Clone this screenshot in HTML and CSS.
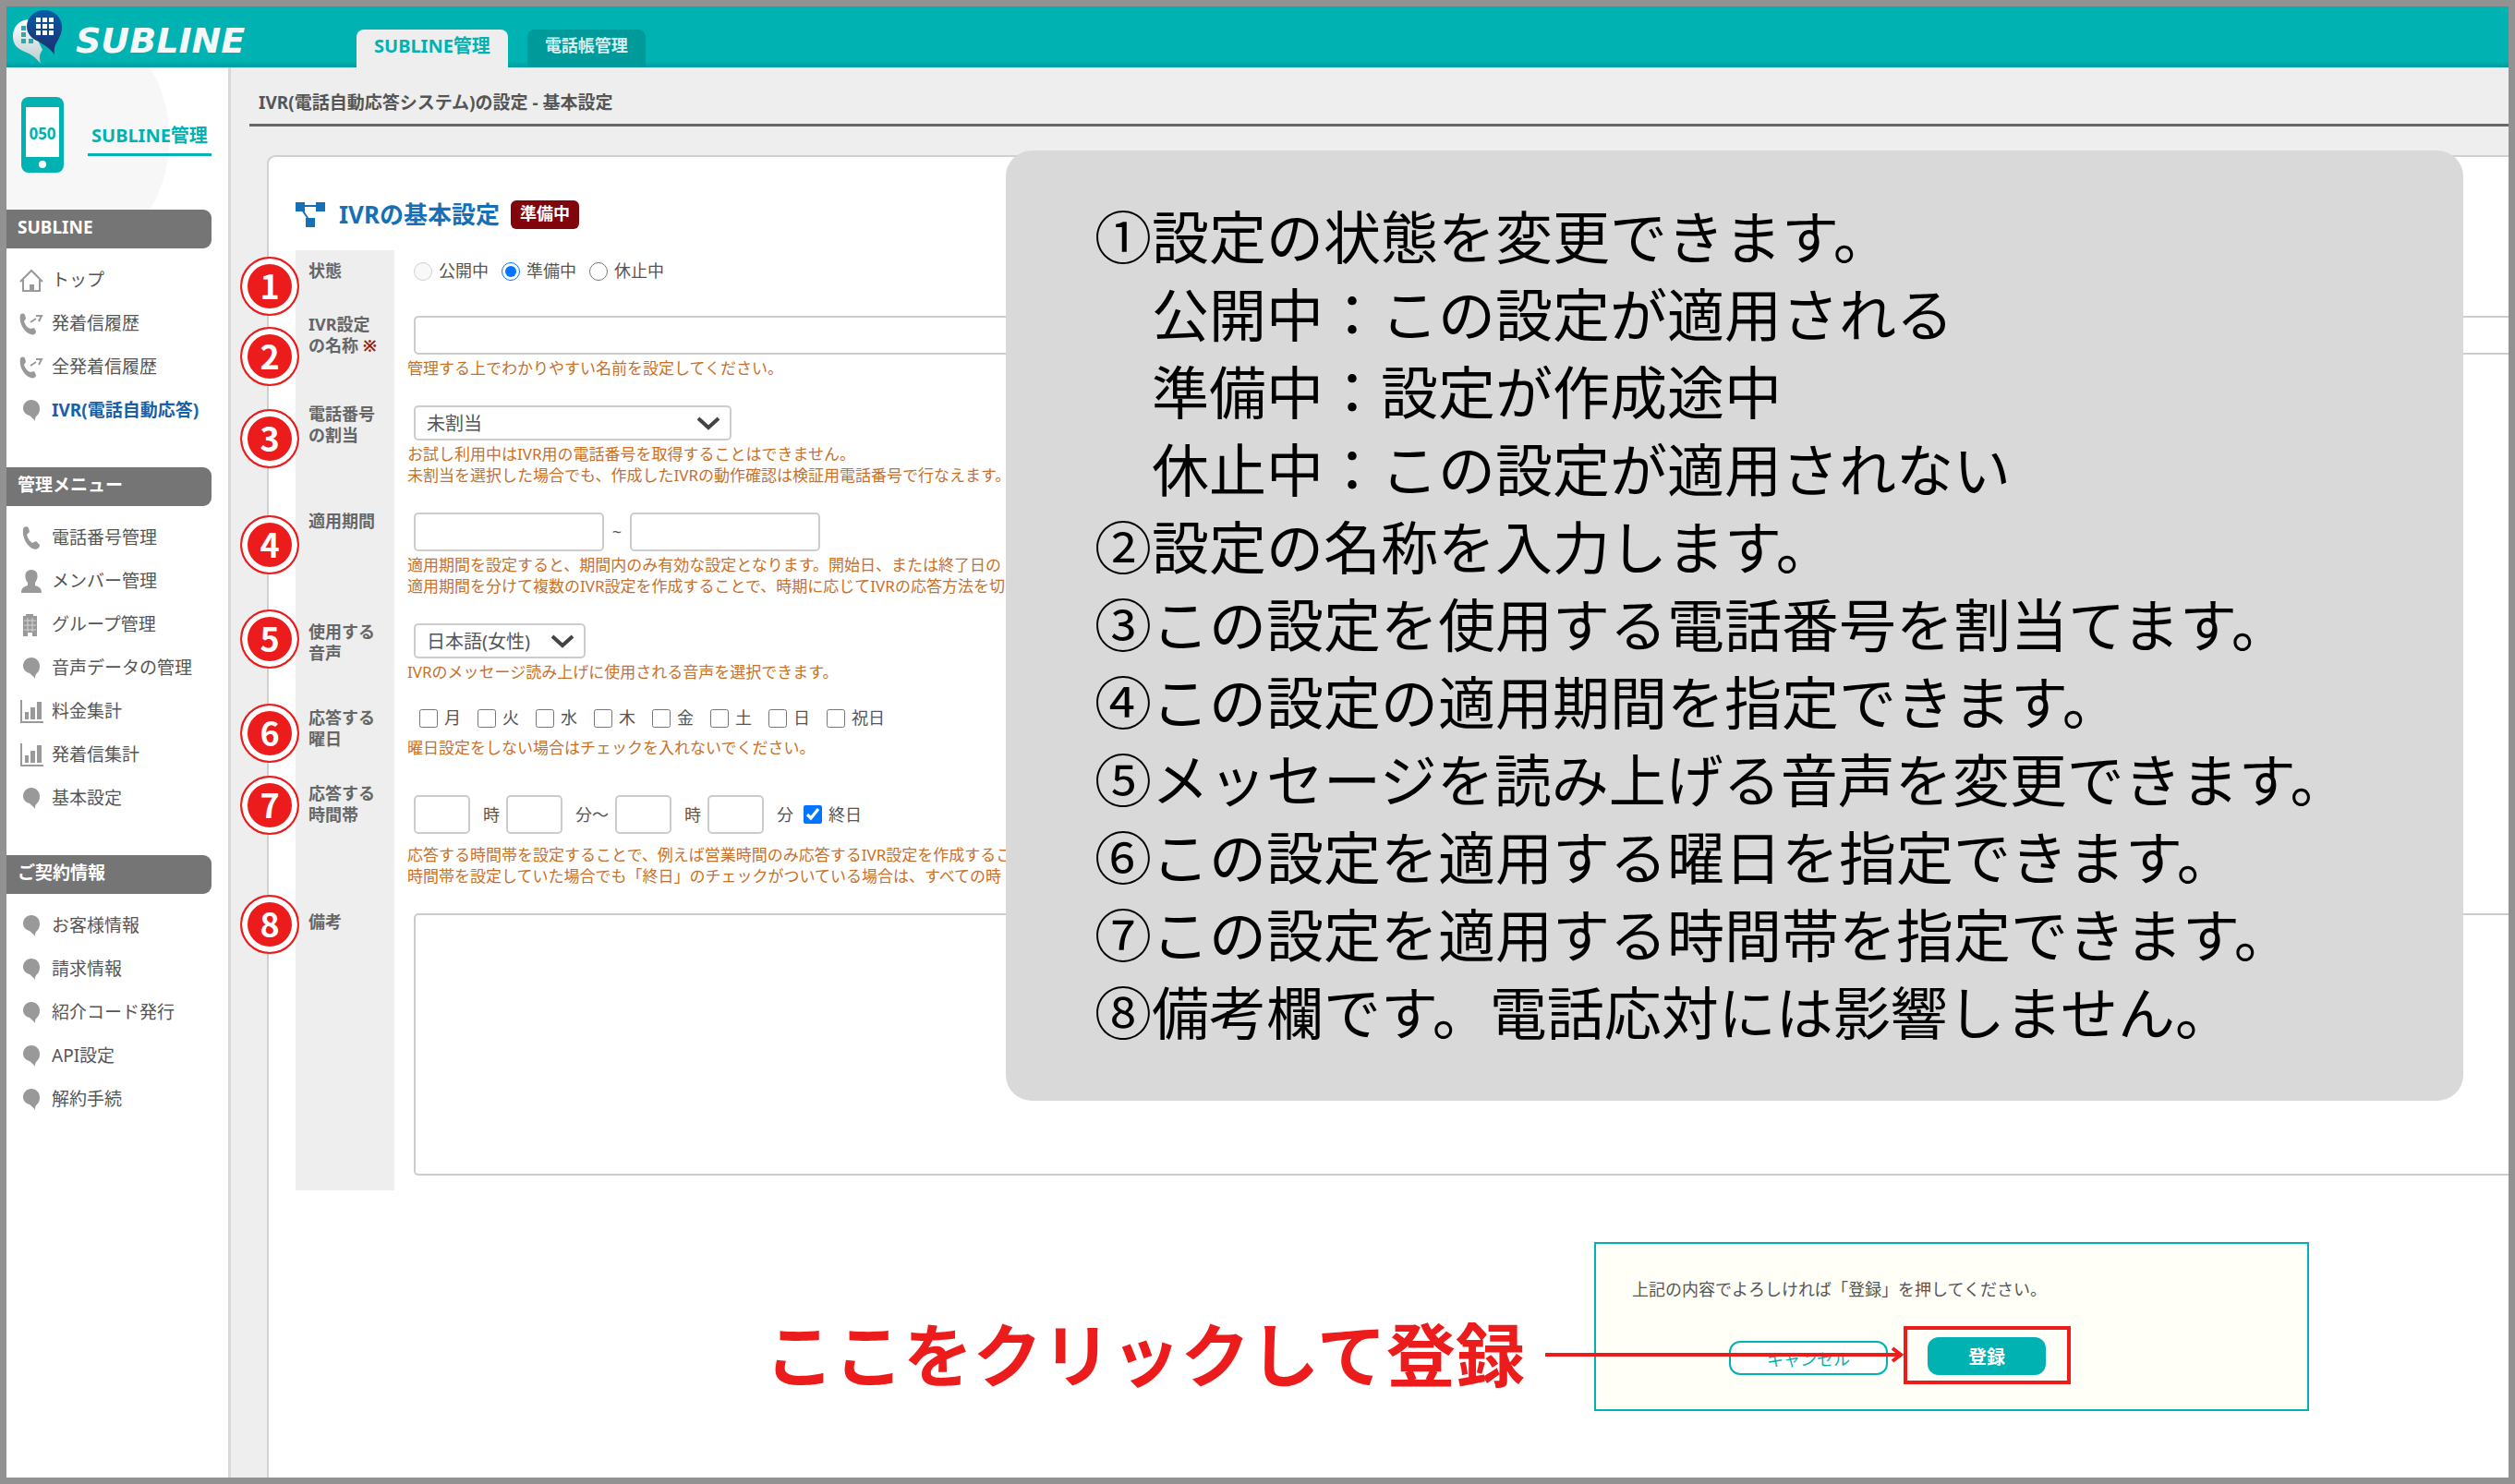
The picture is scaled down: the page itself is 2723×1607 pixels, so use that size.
FILE: index.html
```html
<!DOCTYPE html>
<html lang="ja">
<head>
  <meta charset="UTF-8">
  <title>IVR(電話自動応答システム)の設定 - 基本設定</title>
  <link rel="stylesheet" href="styles.css">
</head>
<body>
  <!-- アイコン -->
  <svg class="sprite" aria-hidden="true">
    <symbol id="i-home" viewBox="0 0 28 28"><path d="M2 15 14 3l12 12M5 13v12h18V13" fill="none" stroke="currentColor" stroke-width="2"/><path d="M12 18h5v7h-5z" fill="currentColor"/></symbol>
    <symbol id="i-call" viewBox="0 0 28 28"><path d="M2 4c1-2 4-2 5 0l1 4-2 3c1 4 4 7 7 8l4-1 2 4c0 3-3 4-6 3C6 23 0 12 2 4z" fill="currentColor"/><path d="M13 12l6-4M19 5h6l-3 6" fill="none" stroke="currentColor" stroke-width="2"/></symbol>
    <symbol id="i-balloon" viewBox="0 0 28 28"><path d="M14 2c5 0 9 4 9 9 0 4-1 6-3 8-2 2-2 3-2 6-2-3-4-4-6-6-4-1-7-4-7-8 0-5 4-9 9-9z" fill="currentColor"/></symbol>
    <symbol id="i-phone" viewBox="0 0 28 28"><path d="M5 4c0-3 5-4 6-1l1 4-3 3c1 4 3 7 6 9l4-2 4 4c0 4-4 6-8 4C8 21 4 12 5 4z" fill="currentColor"/></symbol>
    <symbol id="i-user" viewBox="0 0 28 28"><path d="M14 1c8 0 8 9 4 14v3c3 1 7 2 7 8H3c0-6 4-7 7-8v-3C6 10 6 1 14 1z" fill="currentColor"/></symbol>
    <symbol id="i-building" viewBox="0 0 28 28"><path d="M8 2h8v2h4v22h-5v-4h-5v4H5V4h3z" fill="currentColor"/><path d="M6 9h13M6 14h13M6 19h13M10 6v15M15 6v15" stroke="#fff" opacity=".6"/></symbol>
    <symbol id="i-chart" viewBox="0 0 28 28"><path d="M3 1v24h24" fill="none" stroke="currentColor" stroke-width="2"/><path d="M7 14h4v8H7zM13 9h5v13h-5zM20 3h5v19h-5z" fill="currentColor"/></symbol>
  </svg>

  <div class="page">
    <header class="header">
      <a class="logo" href="#">
        <svg width="56" height="60" viewBox="0 0 56 60" aria-hidden="true">
          <defs>
            <linearGradient id="silver" x2="0" y2="1"><stop offset="0" stop-color="#fff"/><stop offset="1" stop-color="#b9cccd"/></linearGradient>
            <linearGradient id="navy" x2="0" y2="1"><stop offset="0" stop-color="#0a5aa8"/><stop offset="1" stop-color="#1c2f6b"/></linearGradient>
          </defs>
          <path d="M16 11C6 12 0 20 0 29c0 14 10 15 19 20 5 3 8 6 11 10-2-8-1-11 2-15z" fill="url(#silver)"/>
          <path d="M9 18h5v5H9zM9 25h5v5H9zM9 32h5v5H9zM17 32h5v5h-5z" fill="#33a5ac"/>
          <path d="M34 1c11 0 19 8 19 18 0 14-10 17-8 30-5-7-11-10-17-14-8-3-13-9-13-16C15 9 23 1 34 1z" fill="url(#navy)"/>
          <path d="M25 9h5v5h-5zM32 9h5v5h-5zM39 9h5v5h-5zM25 16h5v5h-5zM32 16h5v5h-5zM39 16h5v5h-5zM25 23h5v5h-5zM32 23h5v5h-5zM39 23h5v5h-5z" fill="#fff"/>
        </svg>
        <span>SUBLINE</span>
      </a>
      <nav class="tabs">
        <a class="tab active" href="#">SUBLINE管理</a>
        <a class="tab" href="#">電話帳管理</a>
      </nav>
    </header>

    <div class="body">
      <aside class="sidebar">
        <div class="side-top">
          <svg width="46" height="82" viewBox="0 0 46 82" aria-hidden="true">
            <rect width="46" height="82" rx="8" fill="#00b2b2"/>
            <rect x="5" y="11" width="36" height="54" fill="#fff"/>
            <circle cx="23" cy="73" r="4" fill="#fff"/>
            <text x="23" y="46" text-anchor="middle" class="phone-text">050</text>
          </svg>
          <a href="#">SUBLINE管理</a>
        </div>

        <h3>SUBLINE</h3>
        <ul>
          <li><a href="#"><svg><use href="#i-home"/></svg>トップ</a></li>
          <li><a href="#"><svg><use href="#i-call"/></svg>発着信履歴</a></li>
          <li><a href="#"><svg><use href="#i-call"/></svg>全発着信履歴</a></li>
          <li><a class="current" href="#"><svg><use href="#i-balloon"/></svg>IVR(電話自動応答)</a></li>
        </ul>

        <h3>管理メニュー</h3>
        <ul>
          <li><a href="#"><svg><use href="#i-phone"/></svg>電話番号管理</a></li>
          <li><a href="#"><svg><use href="#i-user"/></svg>メンバー管理</a></li>
          <li><a href="#"><svg><use href="#i-building"/></svg>グループ管理</a></li>
          <li><a href="#"><svg><use href="#i-balloon"/></svg>音声データの管理</a></li>
          <li><a href="#"><svg><use href="#i-chart"/></svg>料金集計</a></li>
          <li><a href="#"><svg><use href="#i-chart"/></svg>発着信集計</a></li>
          <li><a href="#"><svg><use href="#i-balloon"/></svg>基本設定</a></li>
        </ul>

        <h3>ご契約情報</h3>
        <ul>
          <li><a href="#"><svg><use href="#i-balloon"/></svg>お客様情報</a></li>
          <li><a href="#"><svg><use href="#i-balloon"/></svg>請求情報</a></li>
          <li><a href="#"><svg><use href="#i-balloon"/></svg>紹介コード発行</a></li>
          <li><a href="#"><svg><use href="#i-balloon"/></svg>API設定</a></li>
          <li><a href="#"><svg><use href="#i-balloon"/></svg>解約手続</a></li>
        </ul>
      </aside>

      <main class="main">
        <h1>IVR(電話自動応答システム)の設定 - 基本設定</h1>

        <div class="card">
          <div class="card-title">
            <svg width="32" height="28" viewBox="0 0 32 28" fill="#1570b8" aria-hidden="true">
              <path d="M0 1h10v10H0zM22 1h10v10H22zM11 18h10v10H11z"/>
              <path d="M8 5h16M7 9l8 12" fill="none" stroke="#1570b8" stroke-width="2"/>
            </svg>
            <h2>IVRの基本設定</h2>
            <span class="badge">準備中</span>
          </div>

          <form class="form">
            <div class="row">
              <div class="label" id="status-label">状態</div>
              <div class="field options">
                <div class="radios" role="radiogroup" aria-labelledby="status-label">
                  <label><input type="radio" name="status" disabled>公開中</label>
                  <label><input type="radio" name="status" checked>準備中</label>
                  <label><input type="radio" name="status">休止中</label>
                </div>
              </div>
            </div>
            <div class="row">
              <label class="label" for="name">IVR設定<br>の名称 <span class="required">※</span></label>
              <div class="field">
                <input class="text wide" type="text" id="name">
                <p class="help">管理する上でわかりやすい名前を設定してください。</p>
              </div>
            </div>
            <div class="row">
              <label class="label" for="number">電話番号<br>の割当</label>
              <div class="field">
                <div class="select number">
                  <select id="number"><option>未割当</option></select>
                  <svg width="26" height="16" viewBox="0 0 26 16"><path d="M2 2l11 10L24 2"/></svg>
                </div>
                <p class="help">お試し利用中はIVR用の電話番号を取得することはできません。<br>未割当を選択した場合でも、作成したIVRの動作確認は検証用電話番号で行なえます。</p>
              </div>
            </div>
            <div class="row">
              <label class="label" for="from">適用期間</label>
              <div class="field">
                <div class="period">
                  <input class="text" type="text" id="from">
                  <span>~</span>
                  <input class="text" type="text" aria-label="終了日">
                </div>
                <p class="help">適用期間を設定すると、期間内のみ有効な設定となります。開始日、または終了日の<br>適用期間を分けて複数のIVR設定を作成することで、時期に応じてIVRの応答方法を切</p>
              </div>
            </div>
            <div class="row">
              <label class="label" for="voice">使用する<br>音声</label>
              <div class="field">
                <div class="select voice">
                  <select id="voice"><option>日本語(女性)</option></select>
                  <svg width="26" height="16" viewBox="0 0 26 16"><path d="M2 2l11 10L24 2"/></svg>
                </div>
                <p class="help">IVRのメッセージ読み上げに使用される音声を選択できます。</p>
              </div>
            </div>
            <div class="row">
              <div class="label" id="days-label">応答する<br>曜日</div>
              <div class="field options">
                <div class="days" role="group" aria-labelledby="days-label">
                  <label><input type="checkbox">月</label>
                  <label><input type="checkbox">火</label>
                  <label><input type="checkbox">水</label>
                  <label><input type="checkbox">木</label>
                  <label><input type="checkbox">金</label>
                  <label><input type="checkbox">土</label>
                  <label><input type="checkbox">日</label>
                  <label><input type="checkbox">祝日</label>
                </div>
                <p class="help">曜日設定をしない場合はチェックを入れないでください。</p>
              </div>
            </div>
            <div class="row">
              <label class="label" for="hour">応答する<br>時間帯</label>
              <div class="field hours">
                <div class="time">
                  <input class="text" type="text" id="hour"><span>時</span>
                  <input class="text" type="text" aria-label="開始 分"><span>分〜</span>
                  <input class="text" type="text" aria-label="終了 時"><span>時</span>
                  <input class="text" type="text" aria-label="終了 分"><span>分</span>
                  <label><input type="checkbox" checked>終日</label>
                </div>
                <p class="help">応答する時間帯を設定することで、例えば営業時間のみ応答するIVR設定を作成するこ<br>時間帯を設定していた場合でも「終日」のチェックがついている場合は、すべての時</p>
              </div>
            </div>
            <div class="row">
              <label class="label" for="memo">備考</label>
              <div class="field">
                <textarea class="text wide" id="memo"></textarea>
              </div>
            </div>
          </form>

          <div class="confirm">
            <p>上記の内容でよろしければ「登録」を押してください。</p>
            <div class="buttons">
              <button type="button" class="cancel">キャンセル</button>
              <button type="submit" class="submit">登録</button>
            </div>
            <div class="callout">
              <strong>ここをクリックして登録</strong>
              <svg width="388" height="18" viewBox="0 0 388 18" aria-hidden="true"><path d="M0 9h384M376 2l9 7-9 7" fill="none" stroke="#ec1c1c" stroke-width="4"/></svg>
              <span class="frame"></span>
            </div>
          </div>
        </div>
      </main>
    </div>

    <!-- 番号 -->
    <span class="marker m1">1</span>
    <span class="marker m2">2</span>
    <span class="marker m3">3</span>
    <span class="marker m4">4</span>
    <span class="marker m5">5</span>
    <span class="marker m6">6</span>
    <span class="marker m7">7</span>
    <span class="marker m8">8</span>

    <!-- 説明 -->
    <div class="guide">
      <p>①設定の状態を変更できます。</p>
      <p>　公開中：この設定が適用される</p>
      <p>　準備中：設定が作成途中</p>
      <p>　休止中：この設定が適用されない</p>
      <p>②設定の名称を入力します。</p>
      <p>③この設定を使用する電話番号を割当てます。</p>
      <p>④この設定の適用期間を指定できます。</p>
      <p>⑤メッセージを読み上げる音声を変更できます。</p>
      <p>⑥この設定を適用する曜日を指定できます。</p>
      <p>⑦この設定を適用する時間帯を指定できます。</p>
      <p>⑧備考欄です。電話応対には影響しません。</p>
    </div>
  </div>
</body>
</html>
```

FILE: styles.css
```css
* {
  box-sizing: border-box;
}

body {
  margin: 0;
  font-family: "Noto Sans", "Noto Sans CJK JP", sans-serif;
  font-size: 18px;
  line-height: 23px;
  color: #555;
}

h1, h2, h3, p, ul {
  margin: 0;
  padding: 0;
}

a {
  color: inherit;
  text-decoration: none;
}

input, select, textarea, button {
  font-family: inherit;
  color: inherit;
  margin: 0;
}

.sprite {
  display: none;
}

.page {
  position: relative;
  display: flex;
  flex-direction: column;
  min-height: 100vh;
  border: 7px solid #929292;
  background: #eee;
  overflow: hidden;
}

/* ヘッダー */
.header {
  display: flex;
  height: 66px;
  padding-left: 7px;
  background: linear-gradient(#00b2b2 90%, #009c9e);
}

.logo {
  display: flex;
  align-items: center;
  width: 372px;
  gap: 12px;
  color: #f4f8f8;
  font: italic bold 38px "DejaVu Sans", sans-serif;
}

.logo span {
  padding-top: 8px;
}

.tabs {
  display: flex;
  align-items: flex-end;
  gap: 21px;
}

.tab {
  height: 41px;
  padding: 6px 19px;
  border-radius: 8px 8px 0 0;
  background: #009a9a;
  color: #d5f0f0;
  font-size: 18px;
  font-weight: bold;
}

.tab.active {
  background: #eee;
  color: #00b2b2;
  font-size: 20px;
}

.body {
  display: flex;
  flex: 1;
}

/* サイドバー */
.sidebar {
  flex: none;
  width: 243px;
  border-right: 3px solid #d8d8d8;
  background: #fff;
  font-size: 19px;
}

.side-top {
  display: flex;
  align-items: center;
  height: 154px;
  padding: 0 0 8px 16px;
  gap: 26px;
  background: radial-gradient(circle at 26px 77px, #f7f7f7 150px, #fff 151px);
}

.side-top a {
  padding: 0 4px 8px;
  border-bottom: 3px solid #00b2b2;
  color: #00b2b2;
  font-size: 20px;
  font-weight: bold;
  margin-top: 12px;
}

.phone-text {
  font-size: 17px;
  font-weight: bold;
  fill: #00b2b2;
}

.sidebar h3 {
  width: 222px;
  height: 42px;
  padding: 6px 12px;
  border-radius: 0 9px 9px 0;
  background: #757575;
  color: #fff;
  font-size: 19px;
  line-height: 26px;
}

.sidebar ul {
  padding: 11px 0 38px 13px;
  list-style: none;
}

.sidebar li a {
  display: flex;
  align-items: center;
  height: 47px;
  gap: 8px;
  white-space: nowrap;
}

.sidebar li svg {
  width: 28px;
  height: 28px;
  color: #999;
}

.sidebar .current {
  color: #1860a8;
  font-weight: bold;
}

/* メイン */
.main {
  display: flex;
  flex-direction: column;
  flex: 1;
  min-width: 0;
  padding-left: 20px;
}

.main h1 {
  height: 64px;
  padding: 27px 10px 0;
  border-bottom: 3px solid #666;
  font-size: 19px;
}

.card {
  flex: 1;
  margin: 31px 0 0 19px;
  padding: 44px 0 72px 29px;
  border: 2px solid #d0d0d0;
  border-width: 2px 0 0 2px;
  border-radius: 9px 0 0 0;
  background: #fff;
}

.card-title {
  display: flex;
  align-items: center;
  height: 36px;
  margin-bottom: 21px;
}

.card-title h2 {
  margin: 0 12px 0 15px;
  color: #1570b8;
  font-size: 26px;
}

.badge {
  height: 31px;
  padding: 3px 10px;
  border-radius: 6px;
  background: #80060b;
  color: #fff;
  font-weight: bold;
}

.row {
  display: flex;
}

.label {
  flex: none;
  width: 107px;
  padding: 11px 0 0 14px;
  background: #eee;
  color: #666;
  font-weight: bold;
}

.required {
  color: #a01c1c;
}

.field {
  flex: 1;
  min-width: 0;
  padding: 13px 0 16px 21px;
}

.help {
  margin: 3px 0 0 -7px;
  color: #c8702a;
  font-size: 17px;
  white-space: nowrap;
}

.text {
  display: block;
  width: 206px;
  height: 42px;
  padding: 8px 12px;
  border: 2px solid #ccc;
  border-radius: 5px;
  background: #fff;
  font-size: 20px;
}

.wide {
  width: calc(100% + 20px);
}

textarea.text {
  height: 284px;
  resize: none;
}

.select {
  position: relative;
  height: 38px;
}

.number {
  width: 344px;
}

.voice {
  width: 186px;
}

.select select {
  width: 100%;
  height: 38px;
  padding: 0 12px;
  border: 2px solid #ccc;
  border-radius: 5px;
  background: #fff;
  font-size: 20px;
  appearance: none;
}

.select svg {
  position: absolute;
  top: 12px;
  right: 12px;
  fill: none;
  stroke: #444;
  stroke-width: 4;
  pointer-events: none;
}

.options {
  padding-top: 11px;
}

.radios, .days, .period, .time {
  display: flex;
  align-items: center;
}

.radios {
  gap: 14px;
  padding-bottom: 8px;
}

.radios label, .days label, .time label {
  display: flex;
  align-items: center;
  gap: 7px;
}

input[type="radio"], input[type="checkbox"] {
  width: 20px;
  height: 20px;
}

.days {
  gap: 18px;
  padding: 0 0 6px 6px;
}

.period span {
  width: 28px;
  text-align: center;
}

.hours {
  padding-top: 24px;
}

.hours .help {
  margin-top: 11px;
}

.time .text {
  width: 61px;
}

.time span {
  margin: 0 7px 0 14px;
}

.time label {
  margin-left: 4px;
}

/* 確認 */
.confirm {
  position: relative;
  width: 774px;
  height: 183px;
  margin: 56px 216px 0 auto;
  padding: 38px 39px 0;
  border: 2px solid #00b2b2;
  background: #fffff8;
}

.buttons {
  display: flex;
  align-items: flex-end;
  gap: 43px;
  padding: 40px 0 0 105px;
}

.cancel, .submit {
  border-radius: 12px;
  font-size: 18px;
}

.cancel {
  width: 172px;
  height: 37px;
  border: 2px solid #00b2b2;
  background: #fff;
  color: #00b2b2;
}

.submit {
  width: 128px;
  height: 41px;
  border: 0;
  background: #00b2b2;
  color: #fff;
  font-size: 20px;
  font-weight: bold;
}

.callout {
  position: absolute;
  top: 80px;
  right: 256px;
  display: flex;
  align-items: center;
  pointer-events: none;
}

.callout strong {
  margin-right: 22px;
  color: #ec1c1c;
  font-size: 75px;
  line-height: 80px;
  white-space: nowrap;
}

.frame {
  width: 181px;
  height: 63px;
  border: 4px solid #ec1c1c;
}

.marker {
  position: absolute;
  left: 253px;
  width: 64px;
  height: 64px;
  border: 2px solid #ec1c1c;
  border-radius: 50%;
  background: #ec1c1c;
  box-shadow: inset 0 0 0 6px #fff;
  color: #fff;
  font: bold 36px/56px "Noto Sans CJK JP", sans-serif;
  text-align: center;
}

.m1 { top: 271px; }
.m2 { top: 347px; }
.m3 { top: 436px; }
.m4 { top: 551px; }
.m5 { top: 653px; }
.m6 { top: 755px; }
.m7 { top: 833px; }
.m8 { top: 962px; }

.guide {
  position: absolute;
  top: 156px;
  left: 1082px;
  right: 49px;
  padding: 49px 96px 56px;
  border-radius: 28px;
  background: #d9d9d9;
  color: #000;
  font: 62px/84px "Noto Sans CJK JP", sans-serif;
  white-space: nowrap;
}
```
